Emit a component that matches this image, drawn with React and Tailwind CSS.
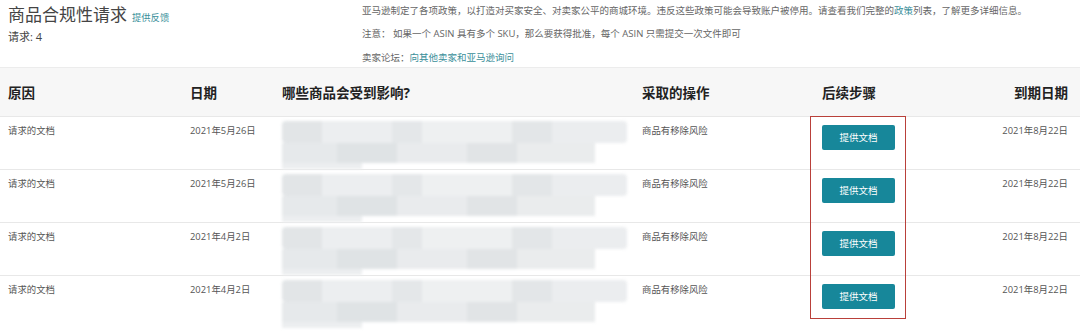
import React from "react";

const rows = [
  { reason: "请求的文档", date: "2021年5月26日", due: "2021年8月22日" },
  { reason: "请求的文档", date: "2021年5月26日", due: "2021年8月22日" },
  { reason: "请求的文档", date: "2021年4月2日", due: "2021年8月22日" },
  { reason: "请求的文档", date: "2021年4月2日", due: "2021年8月22日" },
];

const font = { fontFamily: '"Open Sans", "Noto Sans CJK SC", sans-serif' };

function Blurred() {
  return (
    <div className="flex flex-col pt-[4px] blur-[1.5px]">
      <div className="flex h-[22px] w-[345px] rounded-sm overflow-hidden">
        <div className="w-[40px] bg-[#e2e5e7]" />
        <div className="w-[70px] bg-[#eceef0]" />
        <div className="w-[30px] bg-[#e4e7e9]" />
        <div className="w-[90px] bg-[#eef0f1]" />
        <div className="w-[40px] bg-[#e3e6e8]" />
        <div className="flex-1 bg-[#ebedef]" />
      </div>
      <div className="flex h-[20px] w-[313px] overflow-hidden">
        <div className="w-[55px] bg-[#e6e9eb]" />
        <div className="w-[60px] bg-[#dfe3e5]" />
        <div className="w-[70px] bg-[#e9ebed]" />
        <div className="w-[50px] bg-[#e1e4e6]" />
        <div className="flex-1 bg-[#eaeced]" />
      </div>
      <div className="h-[6px] w-[80px] bg-[#eceef0]" />
    </div>
  );
}

export default function App() {
  return (
    <div className="w-[1080px] h-[332px] bg-white text-[#444] overflow-hidden relative" style={font}>
      <div className="flex h-[67px]">
        <div className="w-[362px] pl-2 pt-[3px]">
          <div className="flex items-end gap-[5px]">
            <span className="text-[17px] leading-[24px] text-[#444]">商品合规性请求</span>
            <span className="text-[9.3px] leading-[18px] text-[#3a8f9a]">提供反馈</span>
          </div>
          <div className="text-[11px] leading-[14px] mt-[3px]">请求: 4</div>
        </div>
        <div className="flex flex-col text-[9.5px] text-[#666] pt-[4px] gap-[9px] leading-[14px]">
          <div>
            亚马逊制定了各项政策，以打造对买家安全、对卖家公平的商城环境。违反这些政策可能会导致账户被停用。请查看我们完整的<span className="text-[#3a8f9a]">政策</span>列表，了解更多详细信息。
          </div>
          <div>注意： 如果一个 ASIN 具有多个 SKU，那么要获得批准，每个 ASIN 只需提交一次文件即可</div>
          <div className="mt-[1px]">
            卖家论坛：<span className="text-[#3a8f9a]">向其他卖家和亚马逊询问</span>
          </div>
        </div>
      </div>

      <div className="grid grid-cols-[182px_92px_360px_180px_1fr_auto] pl-2 pr-3 h-[49px] items-center bg-[#f7f7f7] border-t border-[#ececec] text-[13.5px] font-bold text-[#222] pt-[2px]">
        <div>原因</div>
        <div>日期</div>
        <div>哪些商品会受到影响?</div>
        <div>采取的操作</div>
        <div>后续步骤</div>
        <div>到期日期</div>
      </div>

      {rows.map((r, i) => (
        <div
          key={i}
          className="grid grid-cols-[182px_92px_360px_180px_1fr_auto] pl-2 pr-3 h-[53px] border-t border-[#e8e8e8] text-[9.4px] leading-[14px] text-[#555]"
        >
          <div className="pt-[7px]">{r.reason}</div>
          <div className="pt-[7px]">{r.date}</div>
          <div>
            <Blurred />
          </div>
          <div className="pt-[7px]">商品有移除风险</div>
          <div className="pt-[8px]">
            <div className="w-[73px] h-[25px] rounded-[2px] bg-[#17879a] text-white text-[9.5px] flex items-center justify-center">
              提供文档
            </div>
          </div>
          <div className="pt-[7px] text-right">{r.due}</div>
        </div>
      ))}

      <div className="absolute left-[810px] top-[116px] w-[96px] h-[203px] border-[1.5px] border-[#b9403a] pointer-events-none" />
    </div>
  );
}
